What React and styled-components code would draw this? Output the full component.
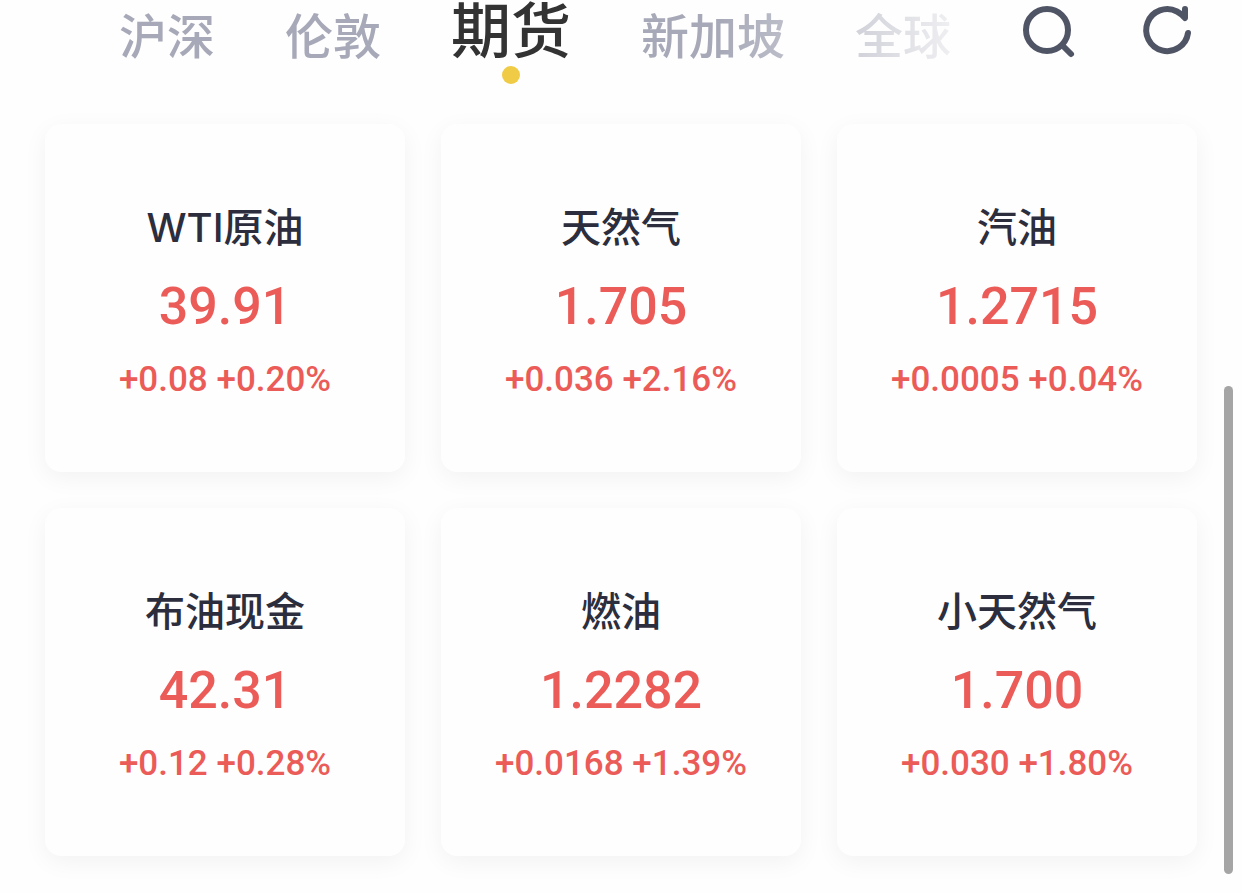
import React, { useState } from "react";
import styled, { createGlobalStyle } from "styled-components";

const GlobalStyle = createGlobalStyle`
	* {
		box-sizing: border-box;
	}

	body {
		margin: 0;
		background: #fefefe;
		font-family: Inter, "Noto Sans CJK SC", sans-serif;
	}
`;

const Page = styled.div`
	position: relative;
	min-height: 100vh;
	padding-bottom: 36px;
`;

const Header = styled.header`
	display: flex;
	align-items: flex-start;
	height: 124px;
	padding: 0 46px 0 119px;
`;

const Tabs = styled.nav`
	display: flex;
	flex: 1;
	gap: 70px;
	min-width: 0;
	mask-image: linear-gradient(to right, #000 600px, transparent 880px);
`;

const Tab = styled.button`
	display: flex;
	flex-direction: column;
	align-items: center;
	justify-content: flex-start;
	flex: none;
	height: 88px;
	padding: 0;
	border: 0;
	background: none;
	font-family: inherit;
	font-size: ${props => (props.$active ? "60px" : "48px")};
	font-weight: 500;
	line-height: ${props => (props.$active ? "62px" : "74px")};
	color: ${props => (props.$active ? "#333333" : "#a7a9b8")};
	white-space: nowrap;
	cursor: pointer;

	&::after {
		content: "";
		display: ${props => (props.$active ? "block" : "none")};
		width: 18px;
		height: 18px;
		margin-top: 4px;
		border-radius: 50%;
		background: #f0cb46;
	}
`;

const Actions = styled.div`
	display: flex;
	gap: 64px;
`;

const IconButton = styled.button`
	display: block;
	width: 56px;
	height: 60px;
	padding: 0;
	border: 0;
	background: none;
	color: #505566;
	cursor: pointer;

	svg {
		display: block;
	}
`;

const Grid = styled.main`
	display: grid;
	grid-template-columns: repeat(3, 1fr);
	gap: 36px;
	padding: 0 45px;
`;

const Card = styled.article`
	display: flex;
	flex-direction: column;
	align-items: center;
	min-height: 348px;
	padding: 80px 12px 0;
	border-radius: 16px;
	background: #fefefe;
	box-shadow: 0 6px 24px rgba(0, 0, 0, 0.05);
	white-space: nowrap;
`;

const Name = styled.h2`
	margin: 0;
	font-size: 40px;
	font-weight: 500;
	line-height: 48px;
	color: #2d2e3d;
`;

const Price = styled.p`
	margin: 23px 0 0;
	font-family: Roboto, sans-serif;
	font-size: 52px;
	font-weight: 500;
	line-height: 64px;
	color: #eb5b57;
`;

const Change = styled.p`
	margin: 20px 0 0;
	font-family: Roboto, sans-serif;
	font-size: 35px;
	font-weight: 500;
	line-height: 42px;
	color: #eb5b57;
`;

const ScrollThumb = styled.div`
	position: absolute;
	top: 386px;
	right: 9px;
	bottom: 19px;
	width: 9px;
	border-radius: 5px;
	background: #a5a5a5;
`;

const SearchIcon = () => (
	<svg width="56" height="60" viewBox="0 0 56 60" fill="none" stroke="currentColor" strokeWidth="6" strokeLinecap="round">
		<circle cx="27" cy="30" r="21" />
		<path d="M43 46l8 8" />
	</svg>
);

const RefreshIcon = () => (
	<svg width="56" height="60" viewBox="0 0 56 60" fill="none" stroke="currentColor" strokeWidth="6" strokeLinecap="round" strokeLinejoin="round">
		<path d="M48 33A21 21 0 1 1 37 11.500Q41 13.500 45 18V9" />
	</svg>
);

const tabs = ["沪深", "伦敦", "期货", "新加坡", "全球"];

const quotes = [
	{ name: "WTI原油", price: "39.91", change: "+0.08", percent: "+0.20%" },
	{ name: "天然气", price: "1.705", change: "+0.036", percent: "+2.16%" },
	{ name: "汽油", price: "1.2715", change: "+0.0005", percent: "+0.04%" },
	{ name: "布油现金", price: "42.31", change: "+0.12", percent: "+0.28%" },
	{ name: "燃油", price: "1.2282", change: "+0.0168", percent: "+1.39%" },
	{ name: "小天然气", price: "1.700", change: "+0.030", percent: "+1.80%" }
];

const App = () => {
	const [active, setActive] = useState("期货");

	return (
		<Page>
			<GlobalStyle />
			<Header>
				<Tabs>
					{tabs.map(tab => (
						<Tab key={tab} $active={tab === active} onClick={() => setActive(tab)}>
							{tab}
						</Tab>
					))}
				</Tabs>
				<Actions>
					<IconButton aria-label="搜索">
						<SearchIcon />
					</IconButton>
					<IconButton aria-label="刷新">
						<RefreshIcon />
					</IconButton>
				</Actions>
			</Header>
			<Grid>
				{quotes.map(quote => (
					<Card key={quote.name}>
						<Name>{quote.name}</Name>
						<Price>{quote.price}</Price>
						<Change>
							{quote.change} {quote.percent}
						</Change>
					</Card>
				))}
			</Grid>
			<ScrollThumb />
		</Page>
	);
};

export default App;
